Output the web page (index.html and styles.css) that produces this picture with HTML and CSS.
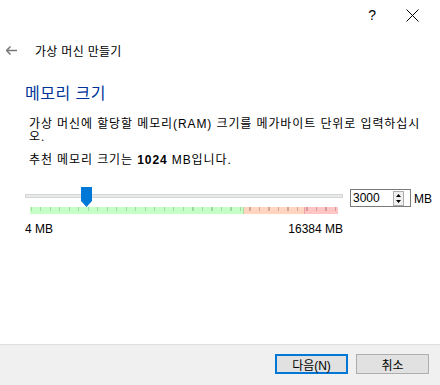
FILE: index.html
```html
<!DOCTYPE html>
<html lang="ko">
<head>
    <meta charset="UTF-8">
    <title>가상 머신 만들기</title>
    <link rel="stylesheet" href="styles.css">
</head>
<body>
    <div class="window">
        <div class="titlebar">
            <span class="title-btn help">?</span>
            <span class="title-btn close">
                <svg width="13" height="13" viewBox="0 0 13 13"><path d="M0.5 0.5 L12.5 12.5 M12.5 0.5 L0.5 12.5" stroke="#000" stroke-width="1"/></svg>
            </span>
        </div>

        <div class="nav">
            <svg class="back" width="11" height="9" viewBox="0 0 11 9"><path d="M0.5 4.5 H11 M4.5 0.5 L0.5 4.5 L4.5 8.5" stroke="#777" stroke-width="1.5" fill="none"/></svg>
            <span class="nav-title">가상 머신 만들기</span>
        </div>

        <div class="page">
            <h1 class="heading">메모리 크기</h1>
            <p class="desc">가상 머신에 할당할 메모리(RAM) 크기를 메가바이트 단위로 입력하십시<br>오.</p>
            <p class="desc">추천 메모리 크기는 <b>1024</b> MB입니다.</p>

            <div class="mem-row">
                <div class="slider">
                    <div class="groove"></div>
                    <div class="scale">
                        <div class="zone green" style="width: 214px"></div>
                        <div class="zone orange" style="width: 61px"></div>
                        <div class="zone red" style="width: 33px"></div>
                    </div>
                    <svg class="thumb" style="left: 56px" width="11" height="20" viewBox="0 0 11 20"><path d="M0 0 H11 V14 L5.5 20 L0 14 Z" fill="#0078d7"/></svg>
                    <div class="limits">
                        <span>4 MB</span>
                        <span>16384 MB</span>
                    </div>
                </div>
                <div class="spinbox">
                    <span class="spin-value">3000</span>
                    <span class="spin-btns">
                        <svg width="9" height="13" viewBox="0 0 9 13"><path d="M4.5 2 L7 5 H2 Z M4.5 11 L7 8 H2 Z" fill="#000"/></svg>
                    </span>
                </div>
                <span class="unit">MB</span>
            </div>
        </div>

        <div class="footer">
            <button class="btn default">다음(N)</button>
            <button class="btn">취소</button>
        </div>
    </div>
</body>
</html>
```

FILE: styles.css
```css
body {
    margin: 0;
    font-family: "Liberation Sans", "Noto Sans CJK KR", sans-serif;
    font-size: 12px;
    color: #000;
    background-color: #fff;
}
.window {
    width: 440px;
    height: 385px;
    display: flex;
    flex-direction: column;
}
.titlebar {
    height: 30px;
    display: flex;
    justify-content: flex-end;
    align-items: center;
}
.title-btn {
    display: flex;
    align-items: center;
    justify-content: center;
}
.help {
    font-size: 14px;
    margin-right: 30px;
}
.close {
    margin-right: 21px;
}
.nav {
    height: 40px;
    display: flex;
    align-items: center;
    padding-left: 6px;
}
.back {
    margin-right: 18px;
}
.nav-title {
    font-size: 12px;
    letter-spacing: 0.3px;
}
.page {
    flex: 1;
    padding-left: 25px;
}
.heading {
    margin: 14px 0 0 0;
    font-size: 16px;
    font-weight: normal;
    color: #003399;
    line-height: 20px;
    letter-spacing: 0.5px;
}
.desc {
    margin: 14px 0 0 4px;
    line-height: 13px;
    letter-spacing: 0.9px;
}
.desc + .desc {
    margin-top: 10px;
}
.mem-row {
    display: flex;
    align-items: flex-start;
    margin-top: 20px;
}
.slider {
    position: relative;
    width: 318px;
    padding-top: 7px;
}
.groove {
    height: 2px;
    background-color: #e7eaea;
    border: 1px solid #d6d6d6;
}
.scale {
    display: flex;
    height: 7px;
    margin: 9px 5px 0 5px;
    background-image: repeating-linear-gradient(to right, #a0a0a0 0, #a0a0a0 1px, transparent 1px, transparent 9.5px);
    background-size: 100% 4px;
    background-repeat: no-repeat;
    background-position: 1px 0;
}
.zone {
    height: 7px;
}
.zone.green { background-color: rgba(160, 255, 160, 0.6); }
.zone.orange { background-color: rgba(255, 170, 130, 0.5); border-left: 1px solid #b0d8a0; }
.zone.red { background-color: rgba(255, 150, 150, 0.55); border-left: 1px solid #f0a0a0; }
.thumb {
    position: absolute;
    top: 0;
}
.limits {
    display: flex;
    justify-content: space-between;
    margin-top: 8px;
    line-height: 14px;
}
.spinbox {
    width: 59px;
    height: 16px;
    border: 1px solid #7a7a7a;
    margin: 2px 0 0 7px;
    display: flex;
    align-items: center;
    justify-content: space-between;
}
.spin-value {
    padding-left: 2px;
}
.spin-btns {
    width: 9px;
    height: 13px;
    border: 1px solid #adadad;
    background-color: #f0f0f0;
    margin-right: 6px;
    display: flex;
}
.unit {
    margin: 5px 0 0 3px;
}
.footer {
    border-top: 1px solid #dfdfdf;
    background-color: #f0f0f0;
    display: flex;
    justify-content: flex-end;
    align-items: flex-start;
    padding-top: 9px;
    padding-right: 11px;
    gap: 8px;
    box-sizing: border-box;
    height: 41px;
}
.btn {
    width: 73px;
    height: 20px;
    padding: 0;
    font-family: "Liberation Sans", "Noto Sans CJK KR", sans-serif;
    font-size: 12px;
    background-color: #e1e1e1;
    border: 1px solid #adadad;
    color: #000;
}
.btn.default {
    border: 2px solid #0078d7;
}
```
